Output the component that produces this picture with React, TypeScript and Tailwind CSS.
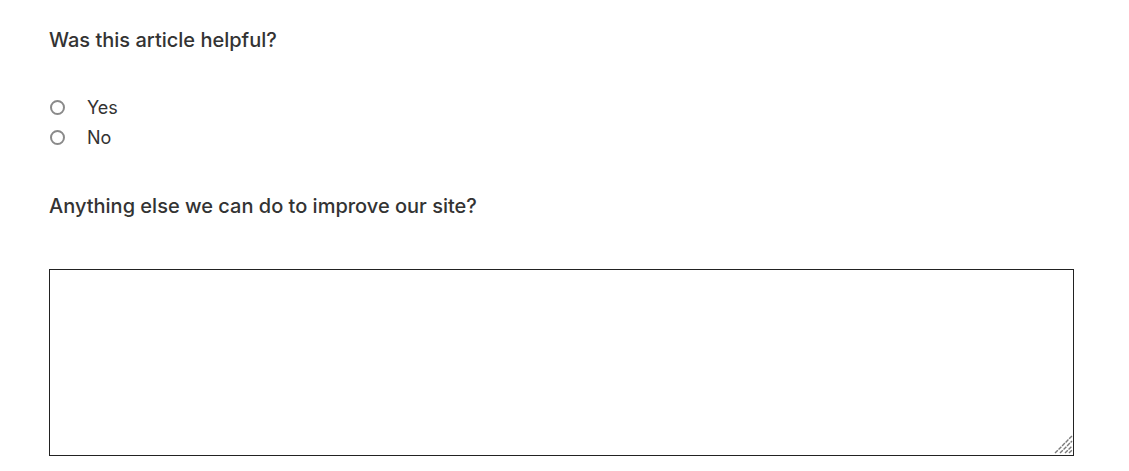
import React from 'react';

export default function App() {
  return (
    <div className="min-h-[471px] bg-white pl-[49px] pr-[55px] pt-[27px] text-[#333] [font-family:Inter,'Liberation_Sans',sans-serif]">
      <form className="flex flex-col">
        <h2 className="text-[20px] font-medium leading-[26px]">Was this article helpful?</h2>
        <div className="mt-[43px] flex flex-col gap-[7px]">
          {['Yes', 'No'].map((opt) => (
            <label key={opt} className="flex items-center gap-[22px] text-[18px] leading-[23px]">
              <span className="ml-[1px] h-[15px] w-[15px] rounded-full border-2 border-[#8a8a8a] bg-white" />
              {opt}
            </label>
          ))}
        </div>
        <h2 className="mt-[44px] text-[20px] font-medium leading-[26px]">Anything else we can do to improve our site?</h2>
        <div className="relative mt-[50px]">
          <textarea className="block h-[187px] w-full resize-none border border-[#222] bg-white p-2 outline-none" />
          {/* resize grip */}
          <svg className="pointer-events-none absolute bottom-[2px] right-[1px]" width="19" height="19" viewBox="0 0 19 19">
            <g stroke="#7a7a7a" strokeWidth="1.4" strokeDasharray="4 1">
              <line x1="1" y1="18" x2="18" y2="1" />
              <line x1="6" y1="18" x2="18" y2="6" />
              <line x1="11" y1="18" x2="18" y2="11" />
              <line x1="15" y1="18" x2="18" y2="15" />
            </g>
          </svg>
        </div>
      </form>
    </div>
  );
}
